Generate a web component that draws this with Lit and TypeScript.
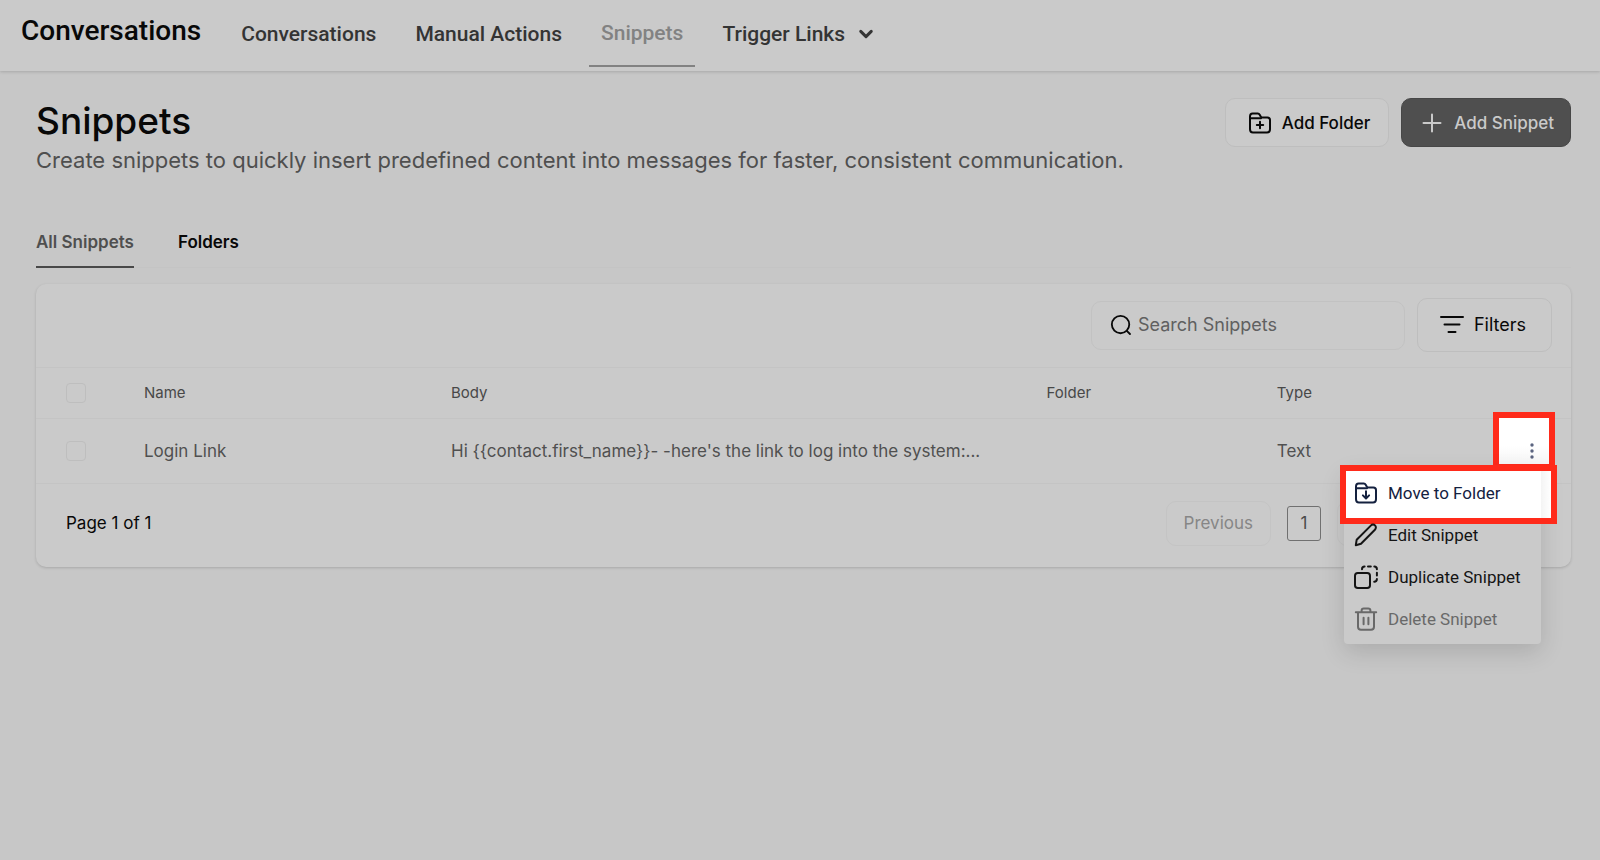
import { LitElement, html, css, svg } from "lit";
import { customElement, state } from "lit/decorators.js";

const folderShape = svg`
  <path d="M2 18.200V5.400C2 3.800 2.900 2.600 4.600 2.600h5.200c.9 0 1.500.4 1.900 1.100l1 1.700c.4.7 1 1.100 1.900 1.100h4.800c1.600 0 2.600 1 2.600 2.600v9.100c0 2-1 3.200-3 3.200H5c-2 0-3-1.200-3-3.200z"/>
  <path d="M2 7.200h11"/>`;

const icons = {
  folderPlus: svg`${folderShape}<path d="M12 10.800v6.400M8.800 14h6.400"/>`,
  folderDown: svg`${folderShape}<path d="M12 10.300v7M8.900 14.400l3.100 3.100 3.100-3.100"/>`,
  plus: svg`<path d="M12 3.500v17M3.500 12h17"/>`,
  search: svg`<circle cx="11.500" cy="11.500" r="9.500"/><path d="M18.600 18.600l3.200 3.200"/>`,
  filters: svg`<path d="M1 4h22M4.500 11.500h15M8.500 19h7"/>`,
  chevron: svg`<path d="M5 8.500l7 7 7-7"/>`,
  pencil: svg`<path d="M1.800 22.200l.9-5.500L16.800 2.600c1.300-1.300 3.100-1.300 4.200-.2 1.200 1.200 1.200 3-.1 4.300L7 20.800z"/>`,
  duplicate: svg`
    <rect x="1" y="8" width="15" height="15" rx="2.800"/>
    <path d="M8 4.200c0-1.800.8-2.700 2.600-2.700M14 1.500h2.800M20.300 1.500c1.700 0 2.600.9 2.600 2.700M22.900 7.800v2.800M22.900 14c0 1.800-.9 2.700-2.700 2.700"/>`,
  trash: svg`
    <path d="M1.800 5.200h20.400M7.600 5.200V3.600c0-1.400.8-2.200 2.200-2.200h4.400c1.400 0 2.200.8 2.200 2.200v1.600M4 5.200v14.600c0 2 1 3 3 3h10c2 0 3-1 3-3V5.200M9.600 10.800v6.400M14.400 10.800v6.400"/>`,
};

const icon = (name: keyof typeof icons, extra = "") =>
  html`<svg class="icon ${extra}" viewBox="0 0 24 24" aria-hidden="true">${icons[name]}</svg>`;

interface Snippet {
  name: string;
  body: string;
  folder: string;
  type: string;
}

@customElement("app-root")
export class AppRoot extends LitElement {
  @state() private snippets: Snippet[] = [
    {
      name: "Login Link",
      body: "Hi {{contact.first_name}}- -here's the link to log into the system:...",
      folder: "",
      type: "Text",
    },
  ];

  static styles = css`
    :host {
      display: block;
      min-height: 100vh;
      background: #c7c7c7;
      color: #080808;
      font-family: Inter, "Liberation Sans", sans-serif;
      font-size: 17px;
      line-height: 24px;
    }
    * {
      box-sizing: border-box;
    }
    button,
    input {
      font: inherit;
      color: inherit;
      margin: 0;
    }
    button {
      cursor: pointer;
    }
    h1,
    p {
      margin: 0;
    }
    .icon {
      width: 24px;
      height: 24px;
      flex: none;
      fill: none;
      stroke: currentColor;
      stroke-width: 2;
      stroke-linecap: round;
      stroke-linejoin: round;
    }

    /* top bar */
    .topbar {
      display: flex;
      height: 71px;
      padding-left: 21px;
      background: #cacaca;
      box-shadow: 0 1px 3px rgba(0, 0, 0, 0.16);
      font-family: Roboto, sans-serif;
      font-weight: 500;
    }
    .brand {
      padding-top: 15px;
      font-size: 28px;
      line-height: 32px;
    }
    .topnav {
      display: flex;
      gap: 15px;
      margin-left: 28px;
      padding-bottom: 4px;
      font-size: 21px;
      color: #343434;
    }
    .topnav a {
      display: flex;
      align-items: center;
      gap: 12px;
      padding: 0 12px;
      color: inherit;
      text-decoration: none;
    }
    .topnav a.active {
      color: #828282;
      border-bottom: 2px solid #828282;
    }
    .icon.caret {
      width: 18px;
      height: 18px;
      stroke-width: 4;
    }

    /* page */
    .page {
      padding: 27px 29px 27px 36px;
    }
    .page-head {
      display: flex;
      justify-content: space-between;
      align-items: flex-start;
    }
    h1 {
      font-size: 37px;
      line-height: 46px;
      font-weight: 500;
    }
    .lead {
      font-size: 22px;
      line-height: 32px;
      color: #4f4f4f;
    }
    .actions {
      display: flex;
      gap: 12px;
    }
    .btn {
      display: flex;
      align-items: center;
      gap: 10px;
      height: 49px;
      padding: 0 18px 0 22px;
      border: 1px solid #bebebe;
      border-radius: 10px;
      background: #cacaca;
      font-weight: 500;
      white-space: nowrap;
    }
    .btn.primary {
      padding: 0 16px 0 18px;
      background: #4f4f4f;
      border-color: #474747;
      color: #cacaca;
    }
    .tabs {
      display: flex;
      gap: 44px;
      margin-top: 41px;
      border-bottom: 1px solid #c4c4c4;
      font-weight: 600;
    }
    .tab {
      height: 51px;
      padding: 0;
      margin-bottom: -1px;
      border: 0;
      border-bottom: 2px solid transparent;
      background: none;
    }
    .tab.active {
      color: #4f4f4f;
      border-bottom-color: #484848;
    }

    /* card */
    .card {
      margin-top: 16px;
      border-radius: 10px;
      background: #cacaca;
      box-shadow: 0 1px 3px rgba(0, 0, 0, 0.16);
    }
    .toolbar {
      display: flex;
      justify-content: flex-end;
      align-items: center;
      gap: 12px;
      padding: 14px 19px 15px;
      font-size: 18px;
    }
    .search {
      display: flex;
      align-items: center;
      gap: 6px;
      width: 314px;
      height: 49px;
      padding: 0 18px;
      border: 1px solid #c2c2c2;
      border-radius: 10px;
    }
    .icon.lens {
      width: 22px;
      height: 22px;
    }
    .search input {
      flex: 1;
      min-width: 0;
      padding: 0;
      border: 0;
      outline: 0;
      background: none;
    }
    .search input::placeholder {
      color: #606060;
      opacity: 1;
    }
    .btn.filters {
      height: 54px;
      padding: 0 25px 0 22px;
      font-weight: 400;
    }

    table {
      width: 100%;
      border-collapse: collapse;
      table-layout: fixed;
      text-align: left;
    }
    .col-check {
      width: 108px;
    }
    .col-name {
      width: 20%;
    }
    .col-body {
      width: 38.8%;
    }
    .col-folder {
      width: 15%;
    }
    th,
    td {
      padding: 0;
      border-top: 1px solid #c4c4c4;
      vertical-align: middle;
    }
    th {
      height: 51px;
      font-size: 15px;
      font-weight: 400;
      color: #484848;
    }
    td {
      height: 64px;
      color: #505050;
    }
    .check {
      padding-left: 30px;
    }
    .check input {
      display: block;
      appearance: none;
      width: 20px;
      height: 20px;
      border: 1px solid #bebebe;
      border-radius: 4px;
    }
    .row-actions {
      position: relative;
    }
    .kebab {
      position: absolute;
      z-index: 1;
      top: -7px;
      right: 16px;
      display: flex;
      justify-content: center;
      align-items: center;
      width: 62px;
      height: 58px;
      padding: 20px 0 0 15px;
      border: 6px solid #ff2a1a;
      background: linear-gradient(#fff 60%, #f6f6f6);
    }
    .dots {
      width: 4px;
      height: 16px;
      fill: #5b6480;
    }

    .menu {
      position: absolute;
      z-index: 2;
      top: 49px;
      right: 30px;
      width: 197px;
      margin: 0;
      padding: 4px 0;
      list-style: none;
      border-radius: 4px;
      background: #cacaca;
      box-shadow: 0 8px 24px rgba(0, 0, 0, 0.14);
      font-family: Roboto, sans-serif;
      color: #141414;
    }
    .menu button {
      position: relative;
      display: flex;
      align-items: center;
      gap: 10px;
      width: 100%;
      height: 42px;
      padding: 0 10px;
      border: 0;
      background: none;
      white-space: nowrap;
    }
    .menu .muted {
      color: #696969;
    }
    .menu .spotlit {
      color: #14213f;
    }
    .menu .spotlit::before {
      content: "";
      position: absolute;
      inset: -7px -16px -10px -4px;
      border: 6px solid #ff2a1a;
      background: linear-gradient(to left, #fff, #f4f4f4 10px, #fff 10px);
    }
    .front {
      position: relative;
    }

    .footer {
      display: flex;
      justify-content: space-between;
      align-items: center;
      padding: 17px 30px 21px;
      border-top: 1px solid #c4c4c4;
    }
    .pager {
      display: flex;
      align-items: center;
      gap: 16px;
      color: #4a4a4a;
    }
    .pager button {
      height: 45px;
      padding: 0 17px;
      border: 1px solid #c4c4c4;
      border-radius: 10px;
      background: none;
      color: #868686;
    }
    .pager .next {
      width: 204px;
    }
    .pager .current {
      height: 35px;
      width: 34px;
      padding: 0;
      border-color: #707070;
      border-radius: 3px;
      color: #4a4a4a;
    }
  `;

  private renderMenu() {
    return html`
      <ul class="menu">
        <li><button class="spotlit">${icon("folderDown", "front")}<span class="front">Move to Folder</span></button></li>
        <li><button>${icon("pencil")}Edit Snippet</button></li>
        <li><button>${icon("duplicate")}Duplicate Snippet</button></li>
        <li><button class="muted">${icon("trash")}Delete Snippet</button></li>
      </ul>
    `;
  }

  private renderRow(item: Snippet) {
    return html`
      <tr>
        <td class="check"><input type="checkbox" aria-label="Select ${item.name}" /></td>
        <td>${item.name}</td>
        <td>${item.body}</td>
        <td>${item.folder}</td>
        <td>${item.type}</td>
        <td class="row-actions">
          <button class="kebab" aria-label="Actions for ${item.name}">
            <svg class="dots" viewBox="0 0 4 16" aria-hidden="true">
              <circle cx="2" cy="2" r="1.700" /><circle cx="2" cy="8" r="1.700" /><circle cx="2" cy="14" r="1.700" />
            </svg>
          </button>
          ${this.renderMenu()}
        </td>
      </tr>
    `;
  }

  render() {
    return html`
      <header class="topbar">
        <div class="brand">Conversations</div>
        <nav class="topnav">
          <a href="#conversations">Conversations</a>
          <a href="#manual">Manual Actions</a>
          <a href="#snippets" class="active" aria-current="page">Snippets</a>
          <a href="#links">Trigger Links ${icon("chevron", "caret")}</a>
        </nav>
      </header>
      <main class="page">
        <div class="page-head">
          <div>
            <h1>Snippets</h1>
            <p class="lead">Create snippets to quickly insert predefined content into messages for faster, consistent communication.</p>
          </div>
          <div class="actions">
            <button class="btn">${icon("folderPlus")}Add Folder</button>
            <button class="btn primary">${icon("plus")}Add Snippet</button>
          </div>
        </div>
        <div class="tabs">
          <button class="tab active">All Snippets</button>
          <button class="tab">Folders</button>
        </div>
        <section class="card">
          <div class="toolbar">
            <label class="search">
              ${icon("search", "lens")}
              <input type="text" placeholder="Search Snippets" aria-label="Search Snippets" />
            </label>
            <button class="btn filters">${icon("filters")}Filters</button>
          </div>
          <table>
            <colgroup>
              <col class="col-check" />
              <col class="col-name" />
              <col class="col-body" />
              <col class="col-folder" />
              <col />
              <col />
            </colgroup>
            <thead>
              <tr>
                <th class="check"><input type="checkbox" aria-label="Select all snippets" /></th>
                <th>Name</th>
                <th>Body</th>
                <th>Folder</th>
                <th>Type</th>
                <th></th>
              </tr>
            </thead>
            <tbody>
              ${this.snippets.map((item) => this.renderRow(item))}
            </tbody>
          </table>
          <div class="footer">
            <span>Page 1 of 1</span>
            <div class="pager">
              <button>Previous</button>
              <button class="current">1</button>
              <button class="next" aria-label="Next page"></button>
            </div>
          </div>
        </section>
      </main>
    `;
  }
}
